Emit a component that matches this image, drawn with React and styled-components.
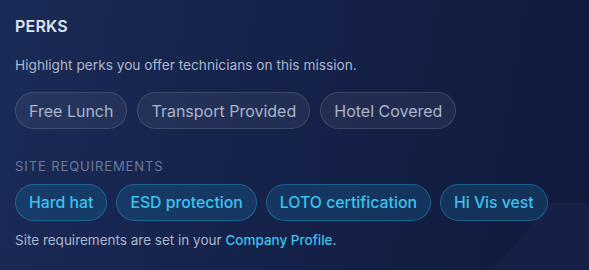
import styled, { createGlobalStyle } from "styled-components";

const GlobalStyle = createGlobalStyle`
  html, body {
    margin: 0;
    padding: 0;
  }
  body {
    font-family: Inter, "Noto Sans", sans-serif;
    background: #101a3a;
  }
`;

const Panel = styled.div`
  width: 589px;
  height: 270px;
  box-sizing: border-box;
  padding: 16px 15px 0;
  background:
    linear-gradient(130deg, transparent 53px, #161f46 54px) 480px 203px / 109px 67px no-repeat,
    linear-gradient(100deg, #1a2b57 0%, #15224a 45%, #111a3c 100%);
  overflow: hidden;
`;

const Heading = styled.h2`
  margin: 0;
  font-size: 16px;
  font-weight: 600;
  letter-spacing: 0.2px;
  color: #dfe5f0;
  line-height: 20px;
`;

const Hint = styled.p`
  margin: 20px 0 0;
  font-size: 13.7px;
  line-height: 18px;
  color: #aab6cb;
`;

const Row = styled.div`
  display: flex;
  gap: ${(p) => p.$gap}px;
  margin-top: ${(p) => p.$top}px;
`;

const Pill = styled.span`
  display: inline-flex;
  align-items: center;
  height: 37px;
  box-sizing: border-box;
  padding: 0 13px;
  border-radius: 19px;
  font-size: ${(p) => (p.$accent ? 15.8 : 16)}px;
  font-weight: ${(p) => (p.$accent ? 500 : 400)};
  color: ${(p) => (p.$accent ? "#3cc3ee" : "#a9b4c8")};
  background: ${(p) =>
    p.$accent ? "rgba(22, 110, 160, 0.28)" : "rgba(255, 255, 255, 0.06)"};
  border: 1px solid
    ${(p) => (p.$accent ? "rgba(40, 150, 200, 0.45)" : "rgba(255, 255, 255, 0.13)")};
`;

const Label = styled.div`
  margin-top: 29px;
  font-size: 13px;
  letter-spacing: 0.9px;
  text-transform: uppercase;
  color: #6c7a96;
  line-height: 16px;
`;

const Note = styled.p`
  margin: 11px 0 0;
  font-size: 13.5px;
  line-height: 16px;
  color: #aab6cb;
`;

const LinkText = styled.a`
  color: #3cc3ee;
  text-decoration: none;
  font-weight: 500;
`;

const perks = ["Free Lunch", "Transport Provided", "Hotel Covered"];
const requirements = ["Hard hat", "ESD protection", "LOTO certification", "Hi Vis vest"];

export default function App() {
  return (
    <>
      <GlobalStyle />
      <Panel>
        <Heading>PERKS</Heading>
        <Hint>Highlight perks you offer technicians on this mission.</Hint>
        <Row $top={18} $gap={10}>
          {perks.map((p) => (
            <Pill key={p}>{p}</Pill>
          ))}
        </Row>
        <Label>Site Requirements</Label>
        <Row $top={10} $gap={9}>
          {requirements.map((r) => (
            <Pill key={r} $accent>
              {r}
            </Pill>
          ))}
        </Row>
        <Note>
          Site requirements are set in your <LinkText href="#">Company Profile</LinkText>.
        </Note>
      </Panel>
    </>
  );
}
